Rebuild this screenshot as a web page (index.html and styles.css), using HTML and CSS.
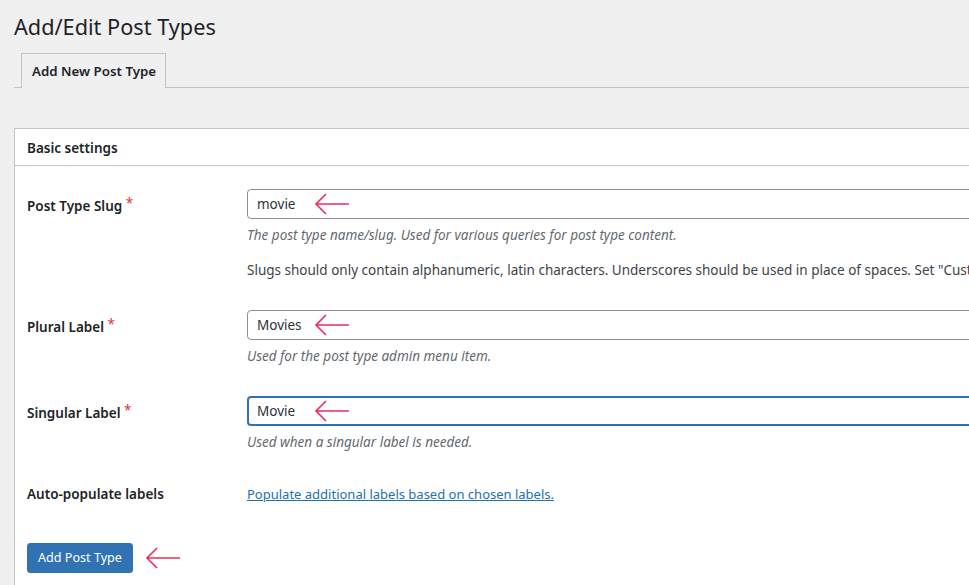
FILE: index.html
```html
<!DOCTYPE html>
<html lang="en">
<head>
<meta charset="utf-8">
<title>Add/Edit Post Types</title>
<link rel="stylesheet" href="styles.css">
</head>
<body>
<div class="wrap">
  <h1 class="page-title">Add/Edit Post Types</h1>
  <div class="tabs">
    <span class="tab">Add New Post Type</span>
  </div>

  <div class="panel">
    <div class="panel-head">Basic settings</div>
    <div class="panel-body">
      <div class="row row-first">
        <div class="label">Post Type Slug <span class="req">*</span></div>
        <div class="field">
          <div class="input-wrap">
            <div class="input">movie</div>
            <svg class="arrow arrow-in" width="36" height="22" viewBox="0 0 36 22"><path d="M35 11H2M12 1L2 11l10 10" fill="none" stroke="#ec2d5d" stroke-width="1.6"/></svg>
          </div>
          <p class="desc">The post type name/slug. Used for various queries for post type content.</p>
          <p class="note">Slugs should only contain alphanumeric, latin characters. Underscores should be used in place of spaces. Set "Custom Rewrite Slug" field to make slug include hyphens or URL friendly.</p>
        </div>
      </div>

      <div class="row">
        <div class="label">Plural Label <span class="req">*</span></div>
        <div class="field">
          <div class="input-wrap">
            <div class="input">Movies</div>
            <svg class="arrow arrow-in" width="36" height="22" viewBox="0 0 36 22"><path d="M35 11H2M12 1L2 11l10 10" fill="none" stroke="#ec2d5d" stroke-width="1.6"/></svg>
          </div>
          <p class="desc">Used for the post type admin menu item.</p>
        </div>
      </div>

      <div class="row">
        <div class="label">Singular Label <span class="req">*</span></div>
        <div class="field">
          <div class="input-wrap">
            <div class="input focus">Movie</div>
            <svg class="arrow arrow-in" width="36" height="22" viewBox="0 0 36 22"><path d="M35 11H2M12 1L2 11l10 10" fill="none" stroke="#ec2d5d" stroke-width="1.6"/></svg>
          </div>
          <p class="desc">Used when a singular label is needed.</p>
        </div>
      </div>

      <div class="row row-auto">
        <div class="label">Auto-populate labels</div>
        <div class="field">
          <a class="link" href="#">Populate additional labels based on chosen labels.</a>
        </div>
      </div>

      <div class="actions">
        <button class="btn" type="button">Add Post Type</button>
        <svg class="arrow" width="36" height="22" viewBox="0 0 36 22"><path d="M35 11H2M12 1L2 11l10 10" fill="none" stroke="#ec2d5d" stroke-width="1.6"/></svg>
      </div>
    </div>
  </div>
</div>
</body>
</html>
```

FILE: styles.css
```css
html, body {
  margin: 0;
  padding: 0;
  background: #f0f0f1;
  overflow: hidden;
  width: 969px;
  height: 585px;
}
body {
  font-family: "Noto Sans", "Open Sans", sans-serif;
  color: #1d2327;
  font-size: 13px;
}
.wrap {
  padding-left: 14px;
  width: 1400px;
}
.page-title {
  margin: 0;
  padding-top: 12px;
  font-size: 21.7px;
  font-weight: 400;
  line-height: 30px;
  height: 41px;
  color: #1d2327;
}
.tabs {
  display: flex;
  border-bottom: 1px solid #c3c4c7;
  padding-left: 7px;
}
.tab {
  display: block;
  height: 34px;
  line-height: 34px;
  padding: 0 10px;
  border: 1px solid #c3c4c7;
  border-bottom: none;
  margin-bottom: -1px;
  background: #f0f0f1;
  font-size: 13.3px;
  font-weight: 600;
  width: 123px;
  white-space: nowrap;
}
.panel {
  margin-top: 40px;
  background: #fff;
  border: 1px solid #c3c4c7;
  width: 1300px;
}
.panel-head {
  height: 36px;
  line-height: 38px;
  padding-left: 12px;
  font-size: 13.5px;
  font-weight: 600;
  border-bottom: 1px solid #c3c4c7;
}
.panel-body {
  padding: 0 12px;
}
.row {
  display: grid;
  grid-template-columns: 220px 1fr;
  padding-top: 23px;
}
.row + .row {
  padding-top: 30px;
}
.label {
  font-size: 13.5px;
  font-weight: 600;
  line-height: 20px;
  padding-top: 4px;
  white-space: nowrap;
}
.req {
  color: #d63638;
  font-weight: 400;
  vertical-align: 3px;
}
.field {
  min-width: 0;
}
.input-wrap {
  position: relative;
}
.input {
  box-sizing: border-box;
  height: 30px;
  line-height: 28px;
  border: 1px solid #8c8f94;
  border-radius: 4px;
  padding: 0 9px;
  font-size: 13.5px;
  color: #2c3338;
  background: #fff;
}
.input.focus {
  border: 2px solid #3172b3;
  line-height: 26px;
  padding-left: 8px;
}
.arrow-in {
  position: absolute;
  left: 67px;
  top: 4px;
}
.desc {
  margin: 6px 0 0;
  font-size: 13.5px;
  line-height: 20px;
  font-style: italic;
  color: #646970;
  white-space: nowrap;
}
.note {
  margin: 15px 0 0;
  font-size: 13.5px;
  line-height: 20px;
  color: #3c434a;
  white-space: nowrap;
}
.row.row-auto {
  padding-top: 32px;
}
.row-auto .label {
  padding-top: 0;
}
.link {
  display: inline-block;
  font-size: 13px;
  line-height: 20px;
  color: #2271b1;
  text-decoration: underline;
}
.actions {
  display: flex;
  align-items: center;
  padding-top: 39px;
  padding-bottom: 20px;
}
.btn {
  font-family: inherit;
  font-size: 12.6px;
  color: #fff;
  background: #3172b3;
  border: 1px solid #3172b3;
  border-radius: 3px;
  height: 30px;
  padding: 0 10px;
  line-height: 28px;
  cursor: pointer;
}
.actions .arrow {
  margin-left: 12px;
}
```
